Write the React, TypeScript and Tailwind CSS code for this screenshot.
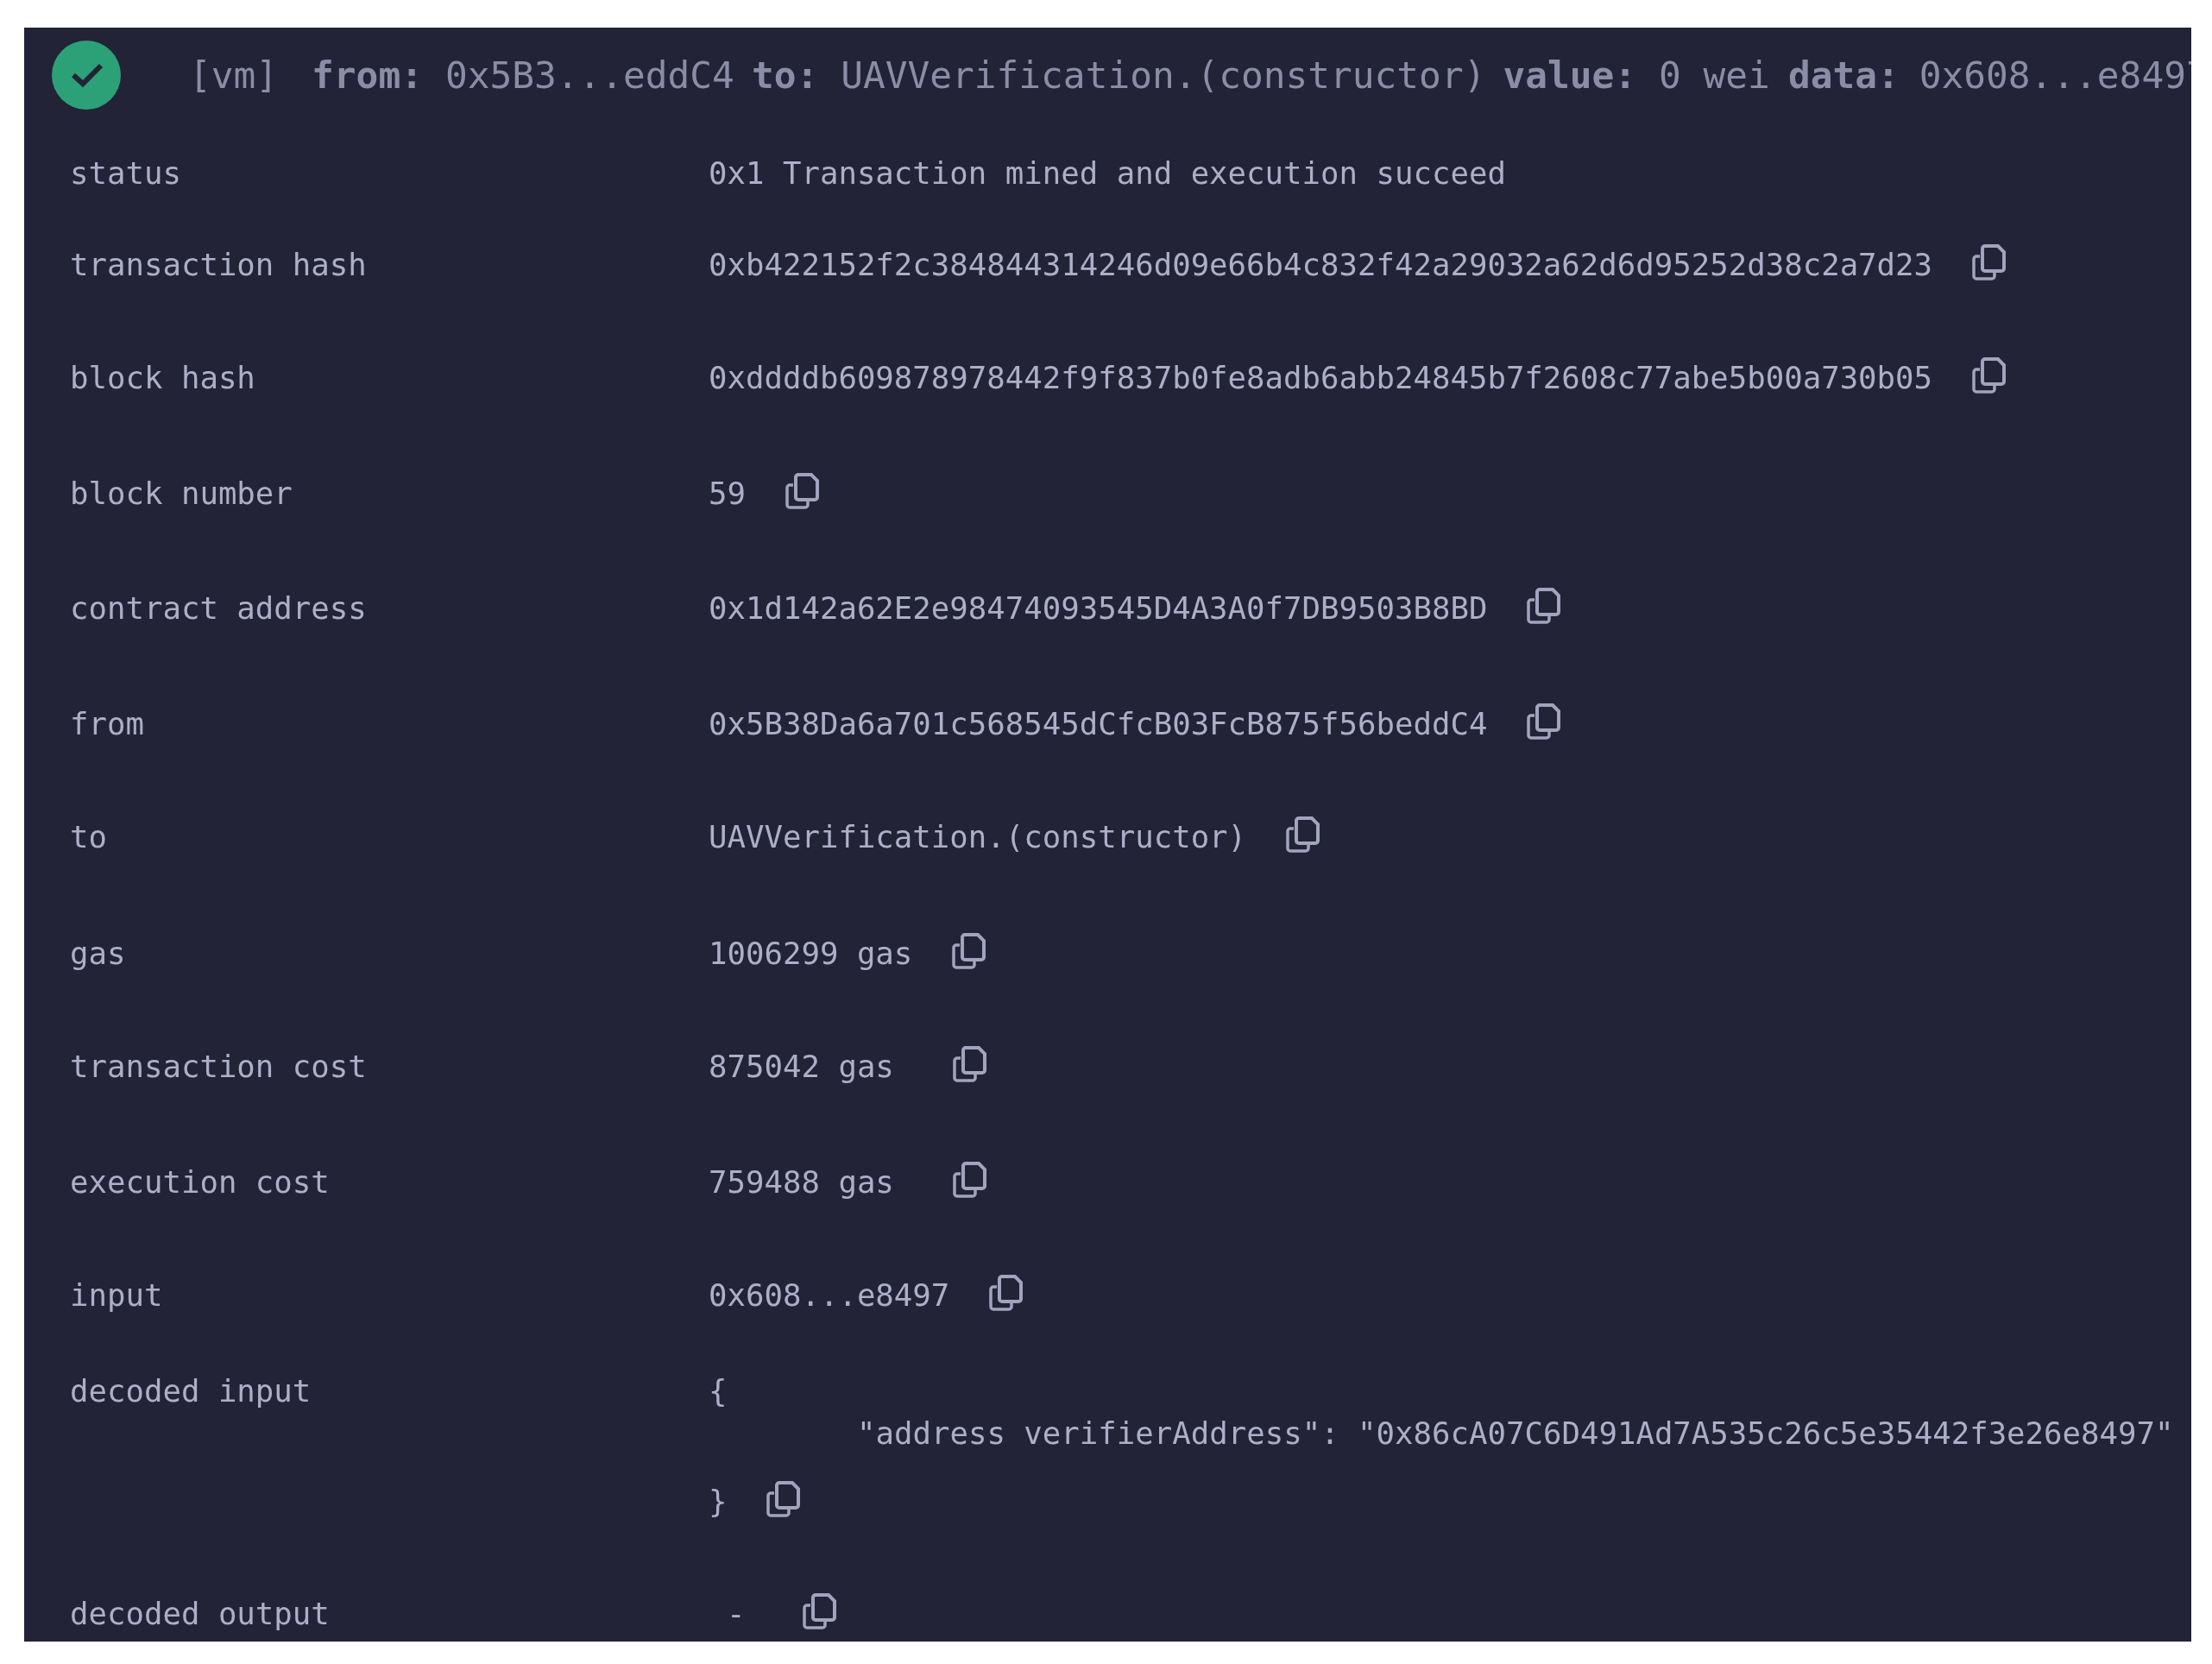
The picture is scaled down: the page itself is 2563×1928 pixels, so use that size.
const fontClass = "font-['DejaVu_Sans_Mono','Liberation_Mono',monospace]";

type Row = {
  label: string;
  value: string;
  rowClass: string;
  gapClass?: string;
  copy?: boolean;
};

const rows: Row[] = [
  { label: "status", value: "0x1 Transaction mined and execution succeed", rowClass: "mt-[52px]", copy: false },
  { label: "transaction hash", value: "0xb422152f2c384844314246d09e66b4c832f42a29032a62d6d95252d38c2a7d23", rowClass: "mt-[62px]" },
  { label: "block hash", value: "0xddddb609878978442f9f837b0fe8adb6abb24845b7f2608c77abe5b00a730b05", rowClass: "mt-[87px]" },
  { label: "block number", value: "59", rowClass: "mt-[90px]" },
  { label: "contract address", value: "0x1d142a62E2e98474093545D4A3A0f7DB9503B8BD", rowClass: "mt-[89px]" },
  { label: "from", value: "0x5B38Da6a701c568545dCfcB03FcB875f56beddC4", rowClass: "mt-[90px]" },
  { label: "to", value: "UAVVerification.(constructor)", rowClass: "mt-[87px]" },
  { label: "gas", value: "1006299 gas", rowClass: "mt-[91px]" },
  { label: "transaction cost", value: "875042 gas", rowClass: "mt-[87px]", gapClass: "ml-[68px]" },
  { label: "execution cost", value: "759488 gas", rowClass: "mt-[90px]", gapClass: "ml-[68px]" },
  { label: "input", value: "0x608...e8497", rowClass: "mt-[87px]" },
];

function CopyIcon({ className = "ml-[46px]" }: { className?: string }) {
  return (
    <svg viewBox="0 0 39 42" className={`h-[42px] w-[39px] shrink-0 -translate-y-[3px] text-[#a2a3bd] ${className}`} fill="none" stroke="currentColor">
      <path d="M9 14H5a3 3 0 0 0-3 3v20a3 3 0 0 0 3 3h18a3 3 0 0 0 3-3v-5" strokeWidth="3.5" />
      <path d="M15 2h15l7 7v19a3 3 0 0 1-3 3H15a3 3 0 0 1-3-3V5a3 3 0 0 1 3-3z" strokeWidth="4" />
    </svg>
  );
}

function InfoRow({ row }: { row: Row }) {
  return (
    <div className={`flex h-[44px] items-center ${row.rowClass}`}>
      <div className="w-[740px] shrink-0">{row.label}</div>
      <div className="whitespace-pre">{row.value}</div>
      {row.copy !== false && <CopyIcon className={row.gapClass ?? "ml-[46px]"} />}
    </div>
  );
}

export default function App() {
  return (
    <div className="h-[1928px] w-[2563px] overflow-hidden bg-white pl-[28px] pt-[32px]">
      <div className="h-[1870px] w-[2511px] overflow-hidden bg-[#222336]">
        <div className={`pl-[53px] text-[35.7px] leading-[44px] text-[#adaec8] blur-[0.4px] ${fontClass}`}>
          <div className="-ml-[21px] mt-[15px] flex h-[80px] items-center whitespace-nowrap text-[42.8px] text-[#8b8ca6]">
            <div className="flex h-[80px] w-[80px] shrink-0 items-center justify-center rounded-full bg-[#2ca177]">
              <svg viewBox="0 0 40 40" className="h-[40px] w-[40px]" fill="none" stroke="#222336" strokeWidth="6">
                <path d="M5 20l11 10L37 9" />
              </svg>
            </div>
            <span className="ml-[79px]">[vm]</span>
            <b className="ml-[39px] font-bold">from:</b>
            <span className="ml-[26px]">0x5B3...eddC4</span>
            <b className="ml-[20px] font-bold">to:</b>
            <span className="ml-[26px]">UAVVerification.(constructor)</span>
            <b className="ml-[20px] font-bold">value:</b>
            <span className="ml-[26px]">0 wei</span>
            <b className="ml-[21px] font-bold">data:</b>
            <span className="ml-[23px]">0x608...e8497</span>
          </div>

          {rows.map((row) => (
            <InfoRow key={row.label} row={row} />
          ))}

          <div className="mt-[67px] flex items-start">
            <div className="h-[44px] w-[740px] shrink-0">decoded input</div>
            <div className="flex flex-col">
              <div className="h-[44px]">{"{"}</div>
              <div className="ml-[172px] mt-[5px] h-[44px] whitespace-pre">{'"address verifierAddress": "0x86cA07C6D491Ad7A535c26c5e35442f3e26e8497"'}</div>
              <div className="mt-[35px] flex h-[44px] items-center">
                <span>{"}"}</span>
                <CopyIcon className="ml-[45px]" />
              </div>
            </div>
          </div>

          <div className="mt-[86px] flex h-[44px] items-center">
            <div className="w-[740px] shrink-0">decoded output</div>
            <div className="ml-[21px]">-</div>
            <CopyIcon className="ml-[66px]" />
          </div>
        </div>
      </div>
    </div>
  );
}
